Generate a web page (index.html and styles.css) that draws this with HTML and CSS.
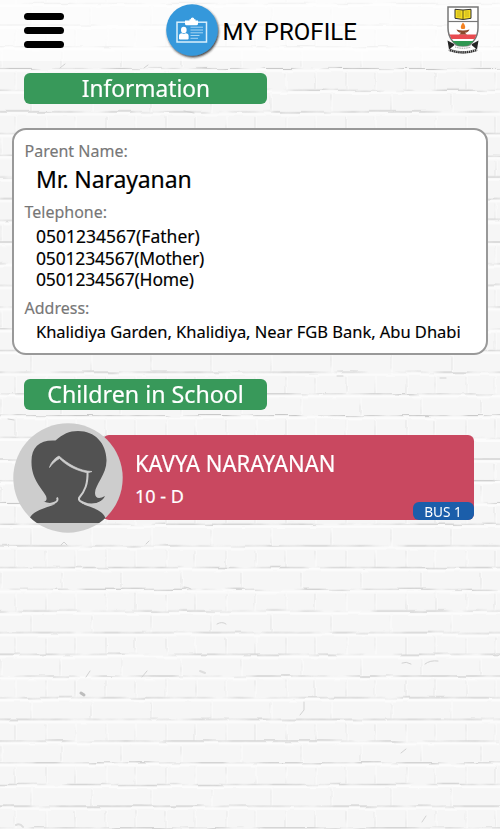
FILE: index.html
```html
<!DOCTYPE html>
<html lang="en">
<head>
<meta charset="utf-8">
<title>My Profile</title>
<link rel="stylesheet" href="styles.css">
</head>
<body>
<svg class="wall" width="500" height="829" aria-hidden="true">
  <defs>
    <pattern id="mortar" x="0" y="26" width="60" height="86.8" patternUnits="userSpaceOnUse">
      <path d="M0 1.5H60M0 23.2H60M0 44.9H60M0 66.6H60" stroke="#fcfcfc" stroke-width="2.500"/>
      <path d="M16 2V21M47 2V21M2 24V42M16 45V64M47 45V64M32 67V86" stroke="#f9f9f9" stroke-width="2"/>
    </pattern>
    <pattern id="shade" x="0" y="26" width="60" height="86.8" patternUnits="userSpaceOnUse">
      <path d="M0 20.8H60M0 42.5H60M0 64.2H60M0 85.9H60" stroke="#c4c4c4" stroke-width="1"/>
      <path d="M15 4V20M46 4V20M1 26V41M15 47V63M46 47V63M31 69V85" stroke="#e6e6e6" stroke-width="1"/>
    </pattern>
    <filter id="rough" x="0" y="0" width="100%" height="100%">
      <feTurbulence type="fractalNoise" baseFrequency="0.04" numOctaves="2" seed="4" result="n"/>
      <feDisplacementMap in="SourceGraphic" in2="n" scale="3.500" xChannelSelector="R" yChannelSelector="G"/>
    </filter>
    <filter id="worn" x="0" y="0" width="100%" height="100%">
      <feTurbulence type="fractalNoise" baseFrequency="0.04" numOctaves="2" seed="4" result="n"/>
      <feDisplacementMap in="SourceGraphic" in2="n" scale="3.500" xChannelSelector="R" yChannelSelector="G" result="d"/>
      <feTurbulence type="fractalNoise" baseFrequency="0.03 0.06" numOctaves="3" seed="9"/>
      <feColorMatrix values="0 0 0 0 0  0 0 0 0 0  0 0 0 0 0  3 0 0 0 -0.9" result="m"/>
      <feComposite in="d" in2="m" operator="in"/>
    </filter>
  </defs>
  <rect width="500" height="829" fill="#f6f6f6"/>
  <rect width="500" height="829" fill="url(#mortar)" filter="url(#rough)"/>
  <rect width="500" height="829" fill="url(#shade)" filter="url(#worn)"/>
  <g fill="none" stroke="#d2d2d2" stroke-linecap="round">
    <path d="M184 587q4 0 7 2M217 624q5-3 9 0M142 677l5-6M86 677l4-6M402 663q4-2 9 1M425 664q5-4 13-3M304 702v8l-4 5M61 545l3-3 3 3M146 544l3-3M8 419l6 1M337 376h6M440 378h6M184 111l10 2M60 68l5-4M144 68l4-3M401 753l5-4M422 822l4-6"/>
    <path d="M81 693l3 2" stroke="#bdbdbd" stroke-width="3"/>
    <path d="M200 671l5 2M16 825q4-2 7 2" stroke="#dedede" stroke-width="2"/>
  </g>
</svg>

<header class="topbar">
  <button class="menu" aria-label="Menu"><i></i><i></i><i></i></button>
  <div class="heading">
    <svg class="badge" width="56" height="58" viewBox="0 0 56 58">
      <defs><filter id="drop" x="-10%" y="-10%" width="125%" height="125%"><feDropShadow dx="1" dy="1.6" stdDeviation=".8" flood-color="#222" flood-opacity=".85"/></filter></defs>
      <circle cx="27" cy="28" r="25.8" fill="#3498db" filter="url(#drop)"/>
      <rect x="12" y="20.200" width="29.500" height="19.800" fill="none" stroke="#d9effc" stroke-width="1.500"/>
      <path d="M20 18.500h4.500v-1.300h1.200a1.800 1.800 0 0 1 3.600 0h1.200v1.300H33v3.300a1.500 1.500 0 0 1-1.500 1.500h-10A1.500 1.500 0 0 1 20 21.800z" fill="#fff"/>
      <ellipse cx="18.800" cy="28" rx="2.800" ry="3.300" fill="#fff"/>
      <path d="M14 36.800v-3q0-2.500 3-2.500l1.800.8 1.800-.8q3 0 3 2.500v3q0 .8-1 .8h-7.600q-1 0-1-.8z" fill="#fff"/>
      <path d="M25.500 25.200H38M25.500 28H38M25.500 30.800H38M25.500 33.500h9M25.500 36.300h7.500" stroke="#a9d6f3" stroke-width="1"/>
    </svg>
    <h1>MY PROFILE</h1>
  </div>
  <svg class="crest" width="34" height="48" viewBox="0 0 34 48">
    <path d="M2 1H32V22C32 32 25 39 17 43C9 39 2 32 2 22Z" fill="#fff" stroke="#777" stroke-width="1.500"/>
    <path d="M2 15.500H32" stroke="#777" stroke-width="1.200"/>
    <path d="M9 3.300l8 .7 8-.7v9l-8 1.200-8-1.200z" fill="#f5dc22" stroke="#333" stroke-width="1"/>
    <path d="M17 4v9.500" stroke="#5e561a" stroke-width="1"/>
    <path d="M11 6h4M11 8h4M11 10h4M19 6h4M19 8h4M19 10h4" stroke="#b5a41c" stroke-width=".7"/>
    <path d="M17 16.500q3.500 4 1.500 6.500h-3q-2-2.500 1.500-6.500z" fill="#f48222"/>
    <path d="M10.500 23.500q6.500 2 13 0-1 3-4.500 3.300l2 2h-8l2-2Q11.500 26.500 10.500 23.500z" fill="#8a4a2c"/>
    <path d="M3.500 28.500H30.500L28.500 33H5.500z" fill="#e94b50"/>
    <path d="M6 35H28L21 40.500H13z" fill="#2f9852"/>
    <path d="M6.500 38Q17 43 27.500 38L31.300 44.500Q17 50 2.700 44.500z" fill="#fff" stroke="#777" stroke-width=".6"/>
    <path d="M1.500 34.500L8 38v1.500l-5 4zM32.500 34.500L26 38v1.500l5 4z" fill="#252525"/>
    <path d="M4 44Q17 48.500 30 44" fill="none" stroke="#333" stroke-width="2.400" stroke-dasharray="1.500 .6"/>
    <path d="M9 41Q17 43.500 25 41" fill="none" stroke="#888" stroke-width="1" stroke-dasharray="1 .8"/>
  </svg>
</header>

<main>
  <h2 class="pill"><span class="t-info">Information</span></h2>
  <section class="card">
    <div class="label">Parent Name:</div>
    <div class="name">Mr. Narayanan</div>
    <div class="label">Telephone:</div>
    <div class="phones">
      <div>0501234567(Father)</div>
      <div class="t-mother">0501234567(Mother)</div>
      <div class="t-home">0501234567(Home)</div>
    </div>
    <div class="label">Address:</div>
    <div class="address">Khalidiya Garden, Khalidiya, Near FGB Bank, Abu Dhabi</div>
  </section>
  <h2 class="pill"><span class="t-child">Children in School</span></h2>
  <section class="child">
    <svg class="avatar" width="110" height="110" viewBox="0 0 110 110">
      <defs><clipPath id="round"><circle cx="55" cy="55" r="54.700"/></clipPath></defs>
      <circle cx="55" cy="55" r="54.700" fill="#cdcdcd"/>
      <g clip-path="url(#round)" fill="#525252">
        <path d="M42.500 17.500C50 11 56 8 65 8C82 8 93 20 93.500 37C94 51 82 62 82 70C82 76 87 76 92 73C88 81 79 83 68 79.500C72 84 91 85 93 97V100H16V97C19 86 39 84 44 80C41 82 35 82.500 30.500 79C34 78 34 76 33 73C29 65 18 56 18.500 38C18.500 24 27 16.500 42.500 17.500Z"/>
      </g>
      <path d="M36.500 44.500C38 39 42 35 46 33C55 41 66 48 79 48.500C75 50 75 49.500 73 49.500C60 46.500 52 41 46.500 35.500C42 38 39 41 36.500 44.500Z" fill="#cdcdcd" stroke="#cdcdcd" stroke-width=".7"/>
      <path d="M74.500 48C75 61 72 68 66 75Q65 78 71 80Q80 84 90 78" fill="none" stroke="#cdcdcd" stroke-width="2"/>
      <path d="M44 74.500Q46 78 41 80Q37 82 30 79.500" fill="none" stroke="#cdcdcd" stroke-width="2"/>
    </svg>
    <div class="strip">
      <div class="who">
        <div class="kid">KAVYA NARAYANAN</div>
        <div class="grade">10 - D</div>
      </div>
      <div class="bus"><span>BUS 1</span></div>
    </div>
  </section>
</main>
</body>
</html>
```
FILE: styles.css
```css
* { box-sizing: border-box; }
body {
  margin: 0;
  width: 500px;
  height: 829px;
  overflow: hidden;
  position: relative;
  background: #f5f5f5;
  color: #000;
  font-family: "Noto Sans", sans-serif;
}
.wall { position: absolute; left: 0; top: 0; z-index: -1; }
h1, h2 { margin: 0; font-weight: 400; }

.topbar {
  height: 61px;
  display: flex;
  align-items: flex-start;
  justify-content: space-between;
  padding: 2px 20px 0 23.500px;
  background: rgba(255, 255, 255, .7);
}
.menu {
  display: flex;
  flex-direction: column;
  gap: 6.500px;
  margin: 10.500px 0 0;
  padding: 0;
  border: 0;
  background: none;
}
.menu i { width: 40.500px; height: 7.500px; border-radius: 3.500px; background: #000; }
.heading { display: flex; margin-left: 12px; }
h1 {
  margin-left: 1.500px;
  font: 24px/60px Roboto, sans-serif;
  letter-spacing: .05px;
  white-space: nowrap;
}
.crest { margin-top: 4px; }

main { padding: 12px 12px 0; }
.pill {
  width: 243px;
  height: 30.500px;
  margin-left: 12px;
  border-radius: 6px;
  background: #38995a;
  color: #fff;
  font-size: 24px;
  line-height: 30px;
  text-align: center;
}
.pill span { display: inline-block; -webkit-text-stroke: .2px; }
.t-info { transform: scaleX(.945); }
.t-child { transform: scaleX(.967); }
.card {
  height: 227px;
  margin: 24.500px 0 24px;
  padding: 9px 10.500px;
  border: 2.500px solid #999;
  border-radius: 14px;
  background: #fff;
  white-space: nowrap;
}
.label { color: #777; font-size: 16px; line-height: 24px; -webkit-text-stroke: .15px; }
.name {
  padding: 0 11.500px;
  font-size: 23px;
  line-height: 33px;
  letter-spacing: -.12px;
  margin-bottom: 4px;
  -webkit-text-stroke: .2px;
}
.phones {
  padding: 2px 11.500px 5px;
  font-size: 17.500px;
  line-height: 21.700px;
  -webkit-text-stroke: .15px;
}
.t-mother { letter-spacing: -.18px; }
.t-home { letter-spacing: -.16px; }
.address {
  padding: 0 11.500px;
  font-size: 16.500px;
  line-height: 24px;
  letter-spacing: -.03px;
  -webkit-text-stroke: .15px;
}

.child { display: flex; align-items: center; height: 110px; margin-top: 13px; padding-left: 1px; }
.avatar { flex: none; z-index: 1; }
.strip {
  display: flex;
  justify-content: space-between;
  width: 371px;
  height: 85px;
  margin-left: -20px;
  padding-left: 32px;
  border-radius: 6px;
  background: #c94860;
  color: #fff;
  white-space: nowrap;
}
.who { width: 230px; padding-top: 11px; -webkit-text-stroke: .2px; }
.kid { font-size: 24px; line-height: 34px; transform: scaleX(.915); transform-origin: left; }
.grade { font-size: 18px; line-height: 32px; }
.bus {
  align-self: flex-end;
  width: 61px;
  height: 18.500px;
  border-radius: 6px;
  background: #1b5eaa;
  font-size: 14.500px;
  line-height: 18px;
  text-align: center;
}
.bus span { display: inline-block; transform: scaleX(.94); }
```
